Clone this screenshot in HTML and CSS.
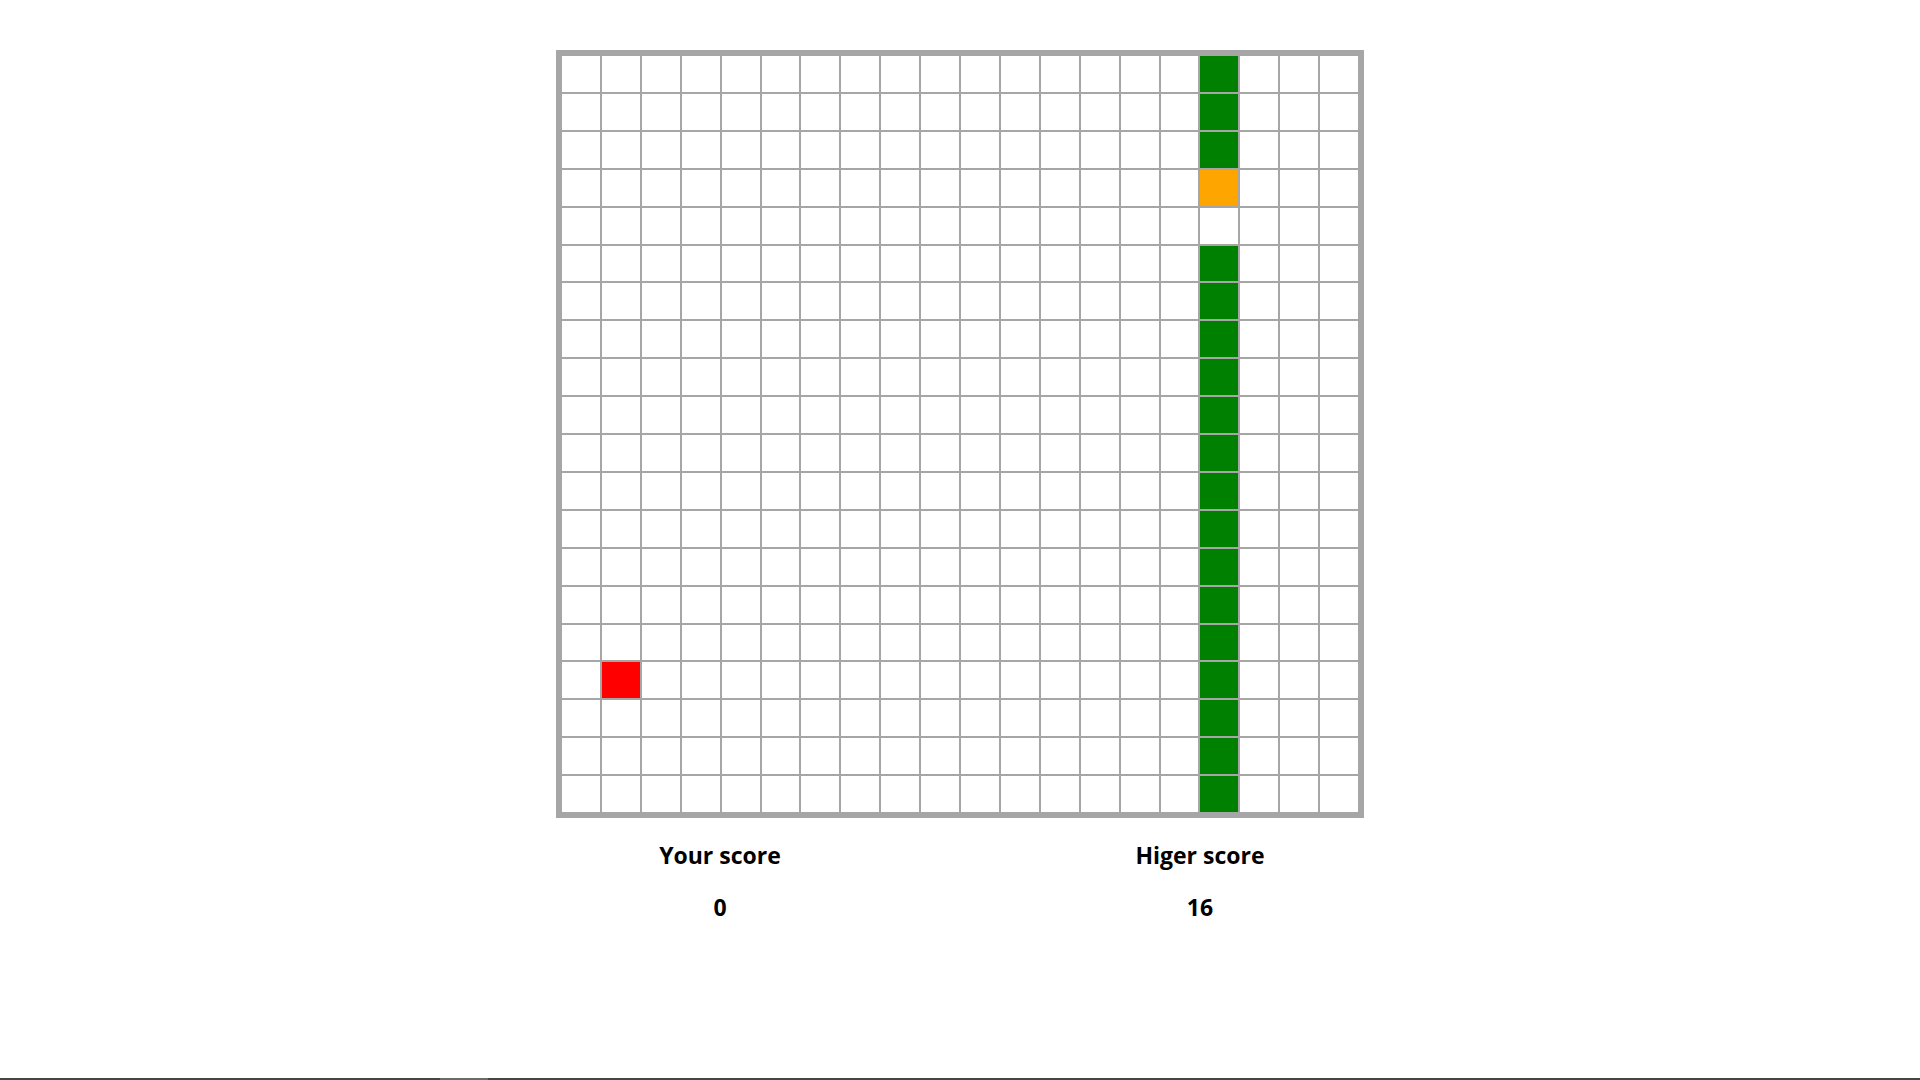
FILE: index.html
```html
<!DOCTYPE html>
<html lang="en">
<head>
  <meta charset="UTF-8" />
  <meta name="viewport" content="width=device-width, initial-scale=1.0"/>
  <title>Snake</title>
  <link rel="stylesheet" href="styles.css">
</head>
<body>
  <main class="game">
    <div class="board" id="board"></div>
    <div class="scores">
      <div class="score-box">
        <h2>Your score</h2>
        <h2 id="score">0</h2>
      </div>
      <div class="score-box">
        <h2>Higer score</h2>
        <h2 id="highScore">16</h2>
      </div>
    </div>
  </main>
  <div class="scroll-bar"><span class="scroll-thumb"></span></div>

  <script>
    const SIZE = 20;
    const board = document.getElementById("board");

    // vị trí rắn, đầu và mồi
    const snake = [];
    for (let r = 0; r < SIZE; r++) {
      if (r !== 3 && r !== 4) snake.push(r * SIZE + 16);
    }
    const head = 3 * SIZE + 16;
    const food = 16 * SIZE + 1;

    for (let i = 0; i < SIZE * SIZE; i++) {
      const cell = document.createElement("div");
      cell.className = "cell";
      if (snake.includes(i)) cell.classList.add("snake");
      if (i === head) cell.classList.add("head");
      if (i === food) cell.classList.add("food");
      board.appendChild(cell);
    }
  </script>
</body>
</html>
```

FILE: styles.css
```css
html, body {
  margin: 0;
  padding: 0;
}

body {
  font-family: "Open Sans", "Noto Sans", Arial, sans-serif;
  background: #fff;
  color: #000;
  display: flex;
  flex-direction: column;
  min-height: 100vh;
}

.game {
  display: flex;
  flex-direction: column;
  align-items: center;
  padding-top: 50px;
}

.board {
  box-sizing: border-box;
  width: 808px;
  height: 768px;
  border: 6px solid #a6a6a6;
  background: #a6a6a6;
  display: grid;
  grid-template-columns: repeat(20, 1fr);
  grid-template-rows: repeat(20, 1fr);
  gap: 2px;
}

.cell {
  background: #fff;
}

.cell.snake {
  background: green;
}

.cell.head {
  background: orange;
}

.cell.food {
  background: red;
}

.scores {
  width: 960px;
  display: flex;
}

.score-box {
  flex: 1;
  text-align: center;
}

.score-box h2 {
  font-size: 23px;
  line-height: 32px;
  font-weight: 700;
  margin: 21px 0 20px;
}

.score-box h2 + h2 {
  margin-top: 20px;
}

.scroll-bar {
  margin-top: auto;
  height: 2px;
  background: #464646;
  position: relative;
}

.scroll-thumb {
  position: absolute;
  left: 440px;
  top: 0;
  width: 48px;
  height: 2px;
  background: #6a6a6a;
}
```
